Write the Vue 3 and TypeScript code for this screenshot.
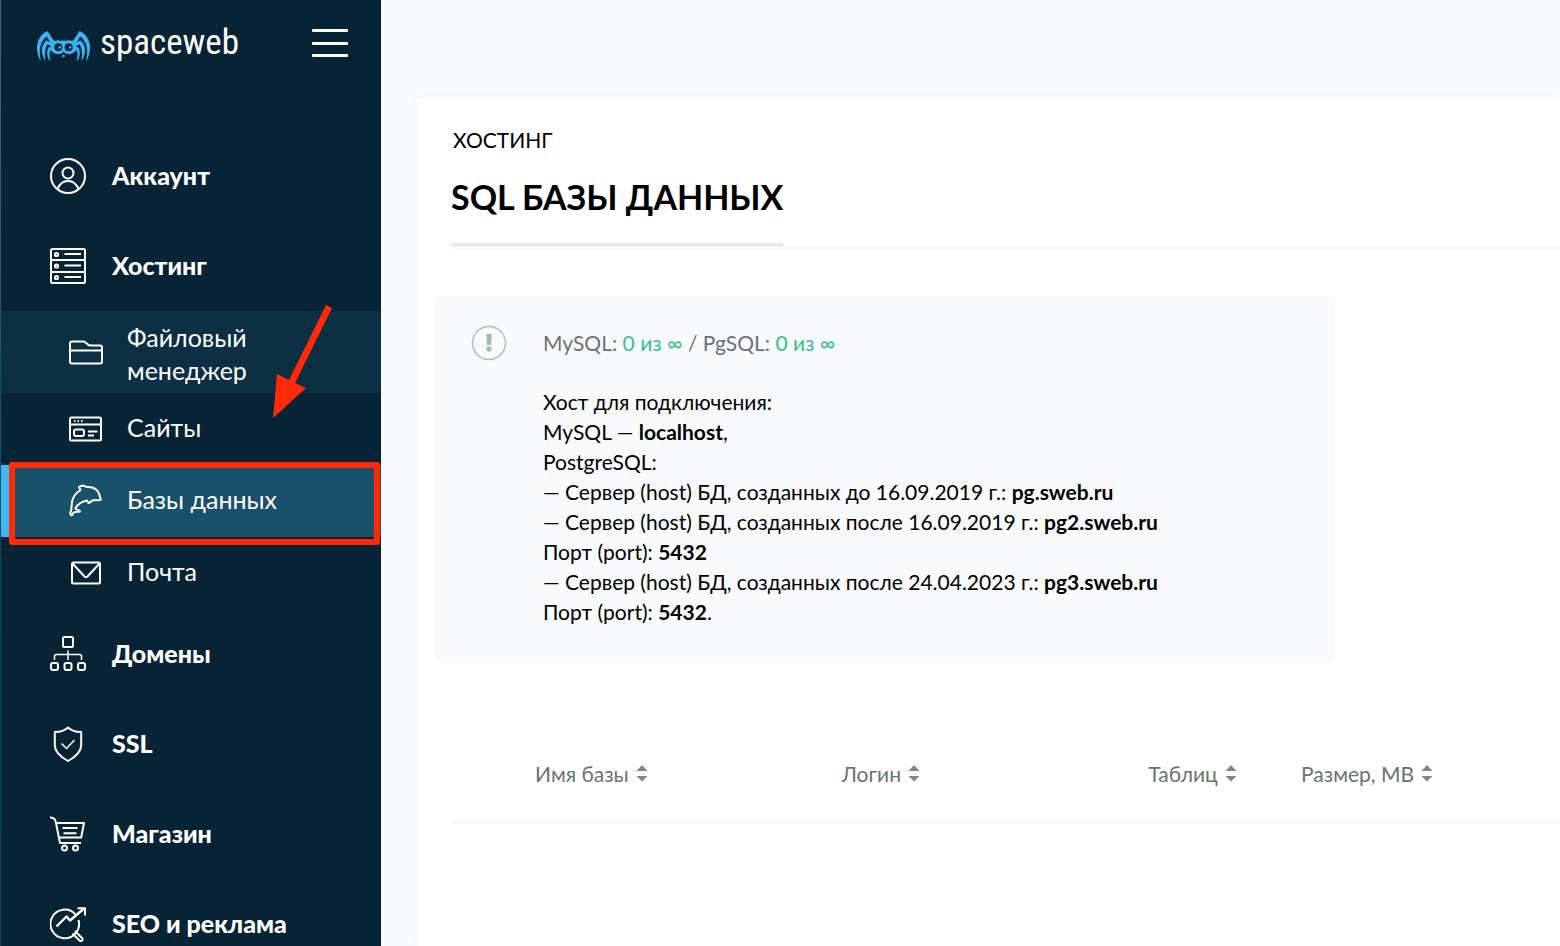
<script setup lang="ts">
import { ref } from 'vue'

interface SubItem {
  id: string
  label: string
}

interface NavItem {
  id: string
  label: string
  children?: SubItem[]
}

interface Column {
  key: string
  label: string
}

interface HostLine {
  text: string
  value?: string
  after?: string
}

const nav: NavItem[] = [
  { id: 'account', label: 'Аккаунт' },
  {
    id: 'hosting',
    label: 'Хостинг',
    children: [
      { id: 'files', label: 'Файловый менеджер' },
      { id: 'sites', label: 'Сайты' },
      { id: 'databases', label: 'Базы данных' },
      { id: 'mail', label: 'Почта' },
    ],
  },
  { id: 'domains', label: 'Домены' },
  { id: 'ssl', label: 'SSL' },
  { id: 'shop', label: 'Магазин' },
  { id: 'seo', label: 'SEO и реклама' },
]

const active = ref('databases')

const columns: Column[] = [
  { key: 'name', label: 'Имя базы' },
  { key: 'login', label: 'Логин' },
  { key: 'tables', label: 'Таблиц' },
  { key: 'size', label: 'Размер, МВ' },
]

const lines: HostLine[] = [
  { text: 'Хост для подключения:' },
  { text: 'MySQL — ', value: 'localhost', after: ',' },
  { text: 'PostgreSQL:' },
  { text: '— Сервер (host) БД, созданных до 16.09.2019 г.: ', value: 'pg.sweb.ru' },
  { text: '— Сервер (host) БД, созданных после 16.09.2019 г.: ', value: 'pg2.sweb.ru' },
  { text: 'Порт (port): ', value: '5432' },
  { text: '— Сервер (host) БД, созданных после 24.04.2023 г.: ', value: 'pg3.sweb.ru' },
  { text: 'Порт (port): ', value: '5432', after: '.' },
]
</script>

<template>
  <div class="app">
    <aside class="sidebar">
      <header class="brand">
        <a class="logo" href="#">
          <svg class="spider" viewBox="0 -6 53 37" aria-hidden="true">
            <g fill="#37b6f6">
              <g v-for="side in ['', 'translate(53 0) scale(-1 1)']" :key="side" :transform="side">
                <path d="M18.500 11 16 8.500 10.500 0C4 3 0 9 0 17c0 5 1.500 10 4 13C2.800 25 2.300 20 3.300 15.500 4.300 11 6.500 8 9.800 5.500L14 12.500z" />
                <path d="M16 12.500 9.500 9.500c-4 3.500-5 7.500-4.300 12 .5 3.500 1.600 6.500 3.300 8.500-.7-5-1.300-12 2-16.800L15 16z" />
                <path d="M16 17 12.500 15.500c-2 2.500-2.700 5.500-2.200 8.500.4 3 1.500 5 3.200 6-1.200-4-1.500-8-.3-10.700L16 21z" />
                <circle cx="21" cy="16.200" r="7" />
              </g>
              <path d="M17 10.500 26.500 9.500 36 10.500v4H17z" />
              <circle cx="26.500" cy="25" r="1.300" />
            </g>
            <circle cx="21.300" cy="16.200" r="4" fill="#072436" />
            <circle cx="31.700" cy="16.200" r="4" fill="#072436" />
            <circle cx="22.800" cy="16.200" r="1.200" fill="#37b6f6" />
            <circle cx="33.200" cy="16.200" r="1.200" fill="#37b6f6" />
          </svg>
          <span class="wordmark">spaceweb</span>
        </a>
        <button class="burger" type="button" aria-label="Меню">
          <span></span><span></span><span></span>
        </button>
      </header>

      <nav class="nav">
        <template v-for="item in nav" :key="item.id">
          <a class="item" href="#">
            <svg class="icon" viewBox="0 0 36 36" aria-hidden="true">
              <template v-if="item.id === 'account'">
                <circle cx="18" cy="18" r="17" />
                <circle cx="18" cy="15" r="5.500" />
                <path d="M7.500 31c2-5 6-8 10.500-8s8.500 3 10.500 8" />
              </template>
              <template v-else-if="item.id === 'hosting'">
                <rect x="1" y="1" width="34" height="11" rx="1.500" />
                <rect x="1" y="12" width="34" height="12" rx="1.500" />
                <rect x="1" y="24" width="34" height="11" rx="1.500" />
                <circle cx="6.500" cy="6.500" r="1.600" />
                <circle cx="6.500" cy="18" r="1.600" />
                <circle cx="6.500" cy="29.500" r="1.600" />
                <path d="M14.500 6h16.500M14.500 17.500h16.500M14.500 29h16.500" />
              </template>
              <template v-else-if="item.id === 'domains'">
                <rect x="13" y="1" width="10" height="10" rx="1.500" />
                <rect x="1" y="27" width="7" height="7" rx="2" />
                <rect x="14.500" y="27" width="7" height="7" rx="2" />
                <rect x="28" y="27" width="7" height="7" rx="2" />
                <path d="M18 14.500v9.500M4.500 24v-3.500q0-2 2-2h23q2 0 2 2V24" stroke-width="1.500" />
              </template>
              <template v-else-if="item.id === 'ssl'">
                <path d="M18 1.500C15 4.500 10 6 4.800 6v13c0 7 6 12 13.200 16 7.200-4 13.200-9 13.200-16V6C26 6 21 4.500 18 1.500z" />
                <path d="M11.500 17.500l5 5 8-8.500" stroke-width="1.500" />
              </template>
              <template v-else-if="item.id === 'shop'">
                <path d="M0 1.500c3 0 5 1 5.700 4L10 27h21" />
                <path d="M6.500 7H34l-2.800 14.500H9" />
                <path d="M12.500 12h15M13.500 17.200h13" />
                <circle cx="14.500" cy="32" r="2.500" />
                <circle cx="25.500" cy="32" r="2.500" />
              </template>
              <template v-else>
                <path d="M25.500 8.500A14.300 14.300 0 1 0 28.500 14" />
                <path d="M6.500 20.500 16.500 10.500 20 14.500 33.500 3" stroke-width="2.400" />
                <path d="M27.500 2.300H35V9.500" />
                <path d="M22.500 27.500l7 7c2 1.500 4-.8 2.500-2.500l-7-7" />
              </template>
            </svg>
            <span class="label">{{ item.label }}</span>
          </a>

          <ul v-if="item.children" class="submenu">
            <li v-for="sub in item.children" :key="sub.id" :class="{ active: active === sub.id, soft: sub.id === 'files' }">
              <a class="subitem" href="#" @click.prevent="active = sub.id">
                <svg class="subicon" viewBox="0 0 34 34" aria-hidden="true">
                  <template v-if="sub.id === 'files'">
                    <path d="M1 26.500v-18q0-2 2-2h11q1.500 0 2.500 1l2.500 2q1 1 2.500 1H31q2 0 2 2v14q0 2-2 2H3q-2 0-2-2zM1 15.500h32" />
                  </template>
                  <template v-else-if="sub.id === 'sites'">
                    <rect x="1" y="5.500" width="31" height="23" rx="1.500" />
                    <path d="M1 12.500h31M5 9h1.500M8.500 9h1.500M12 9h1.500M19 19.500h9.500M19 23.500h6" />
                    <rect x="5" y="17.500" width="10" height="6.500" rx="2" />
                  </template>
                  <template v-else-if="sub.id === 'databases'">
                    <path
                      d="M10 3c2.500-1.800 5.500-1.500 7.500 0 6-.5 11 2 12.800 7.500.3 2 .9 3.500 1.700 5-2 1.500-4 .3-8.500.8-1 .8-2 2-4 2.800-.8-1-1-2-1.500-2.700-5 .8-9 3.500-11.500 7.600-.3 2 3.500 1.300 4.500 3.500-2.500.5-4-.3-6 .8C3.500 29 4 31 2.500 31.500 1 30.500 1.300 28 2.300 26 2.300 23.500 2.800 20.500 3 18 4 12 7.500 8.500 11.500 6 11 4.500 10 4 10 3z"
                    />
                  </template>
                  <template v-else>
                    <rect x="3" y="6.500" width="28" height="21" rx="1.500" />
                    <path d="M3.500 7.500 15.500 20.500q1.500 1.200 3 0L30.500 7.500" />
                  </template>
                </svg>
                <span class="sublabel">{{ sub.label }}</span>
              </a>
              <span v-if="sub.id === 'databases'" class="frame"></span>
            </li>
          </ul>
        </template>
      </nav>

      <svg class="arrow" viewBox="0 0 60 114" aria-hidden="true">
        <path d="M53 0 59 3 22 78 33 83 0 113 4 69 16 75z" fill="#ff2b06" />
      </svg>
    </aside>

    <main class="main">
      <section class="panel">
        <p class="crumb">ХОСТИНГ</p>
        <div class="titlebar">
          <h1>SQL БАЗЫ ДАННЫХ</h1>
        </div>

        <div class="notice">
          <svg class="mark" viewBox="0 0 36 36" aria-hidden="true">
            <circle cx="18" cy="18" r="16.500" fill="none" stroke="#b1bdc2" stroke-width="1.500" />
            <path d="M15.300 9h5.400l-.6 11h-4.200z" fill="#a9b6bc" />
            <circle cx="18" cy="24" r="2.700" fill="#a9b6bc" />
          </svg>
          <div class="notice-body">
            <p class="quota">MySQL: <b>0 из ∞</b> / PgSQL: <b>0 из ∞</b></p>
            <p v-for="(line, i) in lines" :key="i" class="line">{{ line.text }}<strong v-if="line.value">{{ line.value }}</strong>{{ line.after }}</p>
          </div>
        </div>

        <table class="table">
          <thead>
            <tr>
              <td class="lead"></td>
              <th v-for="col in columns" :key="col.key" :class="col.key" scope="col">
                <button type="button" class="sort">
                  {{ col.label }}
                  <svg viewBox="0 0 12 18" aria-hidden="true">
                    <path d="M6 1l5.500 6H.5zM6 17.500l5.500-5.500H.5z" fill="#7d878c" />
                  </svg>
                </button>
              </th>
            </tr>
          </thead>
        </table>
      </section>
    </main>
  </div>
</template>

<style>
body {
  margin: 0;
  background: #f9fafc;
}
</style>

<style scoped>
.app {
  display: flex;
  height: 100vh;
  overflow: hidden;
  font-family: Lato, "Open Sans", sans-serif;
  color: #000;
  background: #f9fafc;
}

.sidebar {
  position: relative;
  flex: none;
  box-sizing: border-box;
  width: 381px;
  padding-left: 1px;
  background: linear-gradient(#4a6863, #0b5166 50%, #0b4560) left / 1px 100% no-repeat #072436;
}

.brand {
  display: flex;
  align-items: center;
  justify-content: space-between;
  height: 86px;
  margin-bottom: 45px;
  padding: 0 33px 0 36px;
}

.logo {
  display: flex;
  align-items: center;
  gap: 10px;
  color: #fff;
  text-decoration: none;
}

.spider {
  width: 53px;
  height: 37px;
}

.wordmark {
  font-family: "Roboto Condensed", "Open Sans Condensed", "Open Sans", sans-serif;
  font-size: 35px;
  font-weight: 400;
  line-height: 40px;
}

.burger {
  display: flex;
  flex-direction: column;
  justify-content: space-between;
  width: 36px;
  height: 28px;
  padding: 0;
  border: 0;
  background: none;
}

.burger span {
  height: 3px;
  border-radius: 1px;
  background: #fff;
}

.item {
  display: flex;
  align-items: center;
  gap: 26px;
  height: 90px;
  padding-left: 49px;
  color: #fff;
  font-size: 25px;
  font-weight: 900;
  text-decoration: none;
}

.label {
  padding-bottom: 2px;
}

.icon {
  width: 36px;
  height: 36px;
}

.icon,
.subicon {
  flex: none;
  fill: none;
  stroke: #fff;
  stroke-width: 2;
  stroke-linejoin: round;
}

.submenu {
  margin: 0;
  padding: 0;
  list-style: none;
}

.submenu li {
  position: relative;
}

.subitem {
  display: flex;
  align-items: center;
  gap: 24px;
  min-height: 72px;
  box-sizing: border-box;
  padding: 6px 100px 6px 68px;
  color: #fff;
  font-size: 25px;
  line-height: 33px;
  text-decoration: none;
}

.sublabel {
  padding-bottom: 4px;
}

.soft .sublabel {
  padding: 4px 0 0;
}

.subicon {
  width: 34px;
  height: 34px;
}

.soft {
  background: #0c2f44;
}

.active {
  background: #185169;
  box-shadow: inset 8px 0 #3db9f8;
}

.frame {
  position: absolute;
  inset: -3px 1px -8px 8px;
  border: 6px solid #ff2b06;
  border-radius: 3px;
}

.arrow {
  position: absolute;
  left: 273px;
  top: 305px;
  width: 60px;
  height: 114px;
}

.main {
  display: flex;
  flex: 1;
  min-width: 0;
  padding: 97px 0 0 36px;
}

.panel {
  flex: 1;
  min-width: 0;
  padding: 28px 0 0 36px;
  background: #fff;
  box-shadow: 0 0 8px #eef2f6;
}

.crumb {
  margin: 0;
  font-size: 21px;
  line-height: 30px;
}

.titlebar {
  display: flex;
  border-bottom: 4px solid #f9fafc;
}

h1 {
  margin: 18px 0 0 -2px;
  padding-bottom: 22px;
  border-bottom: 3px solid #e3e8ec;
  font-size: 34px;
  line-height: 48px;
}

.notice {
  display: flex;
  gap: 36px;
  box-sizing: border-box;
  max-width: 900px;
  margin: 46px 0 0 -18px;
  padding: 29px 36px 35px;
  border-radius: 6px;
  background: #f9fafc;
}

.mark {
  flex: none;
  width: 36px;
  height: 36px;
}

.notice p {
  margin: 0;
  font-size: 21px;
  line-height: 30px;
}

.notice .quota {
  margin: 3px 0 29px;
  color: #6a7276;
}

.quota b {
  color: #36bf8e;
  font-weight: 400;
}

.table {
  width: 100%;
  margin-top: 64px;
  border-collapse: collapse;
  border-bottom: 4px solid #f9fafc;
  table-layout: fixed;
}

.table th,
.table td {
  height: 94px;
  padding: 0;
  text-align: left;
}

.lead {
  width: 82px;
}

.name,
.login {
  width: 27.7%;
}

.tables {
  width: 13.8%;
}

.sort {
  display: flex;
  align-items: center;
  gap: 7px;
  padding: 0;
  border: 0;
  background: none;
  color: #6a7276;
  font: inherit;
  font-weight: 400;
  font-size: 21px;
}

.sort svg {
  width: 12px;
  height: 18px;
}
</style>
